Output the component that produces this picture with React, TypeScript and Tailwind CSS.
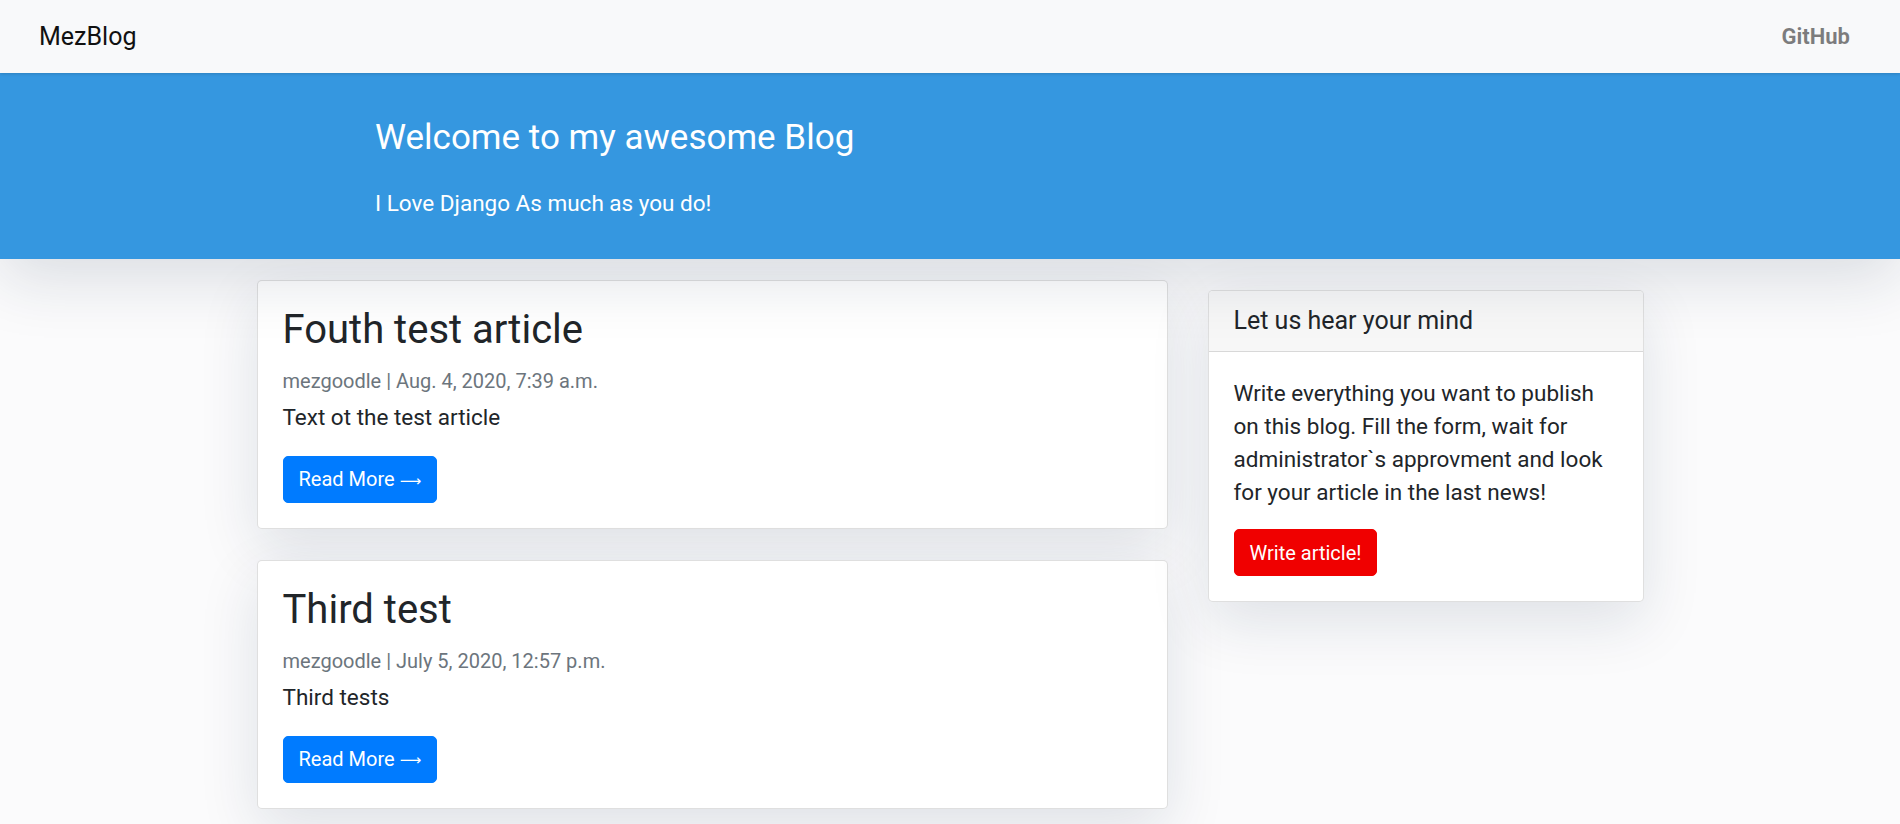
const posts = [
  {
    title: "Fouth test article",
    author: "mezgoodle",
    date: "Aug. 4, 2020, 7:39 a.m.",
    text: "Text ot the test article",
  },
  {
    title: "Third test",
    author: "mezgoodle",
    date: "July 5, 2020, 12:57 p.m.",
    text: "Third tests",
  },
];

function PostCard({ post }: { post: (typeof posts)[number] }) {
  return (
    <div className="bg-white border border-[rgba(0,0,0,0.125)] rounded-[5px] shadow-[0_20px_60px_rgba(20,40,70,0.12)] p-[25px]">
      <h2 className="text-[40px] leading-[1.2] mb-[12px] text-[#212529]">{post.title}</h2>
      <p className="text-[20px] leading-[1.5] text-[#6c757d] mb-[5px]">
        {post.author} | {post.date}
      </p>
      <p className="text-[22.5px] leading-[1.5] text-[#212529] mb-[21px]">{post.text}</p>
      <a
        href="#"
        className="inline-flex items-center bg-[#007bff] text-white text-[20px] leading-[1.5] px-[15px] py-[7.5px] border border-[#007bff] rounded-[5px]"
      >
        Read More <span className="ml-[5px] mt-[3px] font-['DejaVu_Sans',sans-serif] text-[15px]">&#x27F6;</span>
      </a>
    </div>
  );
}

export default function App() {
  return (
    <div className="min-h-screen bg-[#fbfbfc] font-['Roboto','Liberation_Sans',sans-serif] text-[#212529]">
      <nav className="relative z-20 h-[73px] bg-[#f8f9fa] flex items-center justify-between pl-[39px] pr-[50px] shadow-[0_1px_3px_rgba(0,0,0,0.15)]">
        <a href="#" className="text-[25px] leading-[1.5] text-[#111]">
          MezBlog
        </a>
        <a href="#" className="text-[22px] font-bold leading-[1.5] text-[rgba(0,0,0,0.5)]">
          GitHub
        </a>
      </nav>

      <header className="relative z-10 h-[186px] bg-[#3597e0] shadow-[0_20px_60px_rgba(20,40,70,0.14)] pl-[375px] pt-[44px] text-white">
        <h1 className="text-[35px] leading-[1.2]">Welcome to my awesome Blog</h1>
        <p className="text-[22.5px] leading-[1.5] mt-[28px]">I Love Django As much as you do!</p>
      </header>

      <main className="w-[1387px] mx-auto flex items-start gap-[40px] pt-[21px] pb-[40px]">
        <div className="w-[911px] flex flex-col gap-[31px]">
          {posts.map((p) => (
            <PostCard key={p.title} post={p} />
          ))}
        </div>

        <aside className="w-[436px] mt-[10px] bg-white border border-[rgba(0,0,0,0.125)] rounded-[5px] shadow-[0_20px_60px_rgba(20,40,70,0.12)] overflow-hidden">
          <div className="bg-[#f7f7f7] border-b border-[rgba(0,0,0,0.125)] px-[25px] py-[15px]">
            <h5 className="text-[25px] leading-[1.2]">Let us hear your mind</h5>
          </div>
          <div className="p-[25px]">
            <p className="text-[22.5px] leading-[33px] mb-[20px]">
              Write everything you want to publish on this blog. Fill the form, wait for administrator`s approvment and
              look for your article in the last news!
            </p>
            <a
              href="#"
              className="inline-block bg-[#f00000] text-white text-[20px] leading-[1.5] px-[15px] py-[7.5px] border border-[#f00000] rounded-[5px]"
            >
              Write article!
            </a>
          </div>
        </aside>
      </main>
    </div>
  );
}
